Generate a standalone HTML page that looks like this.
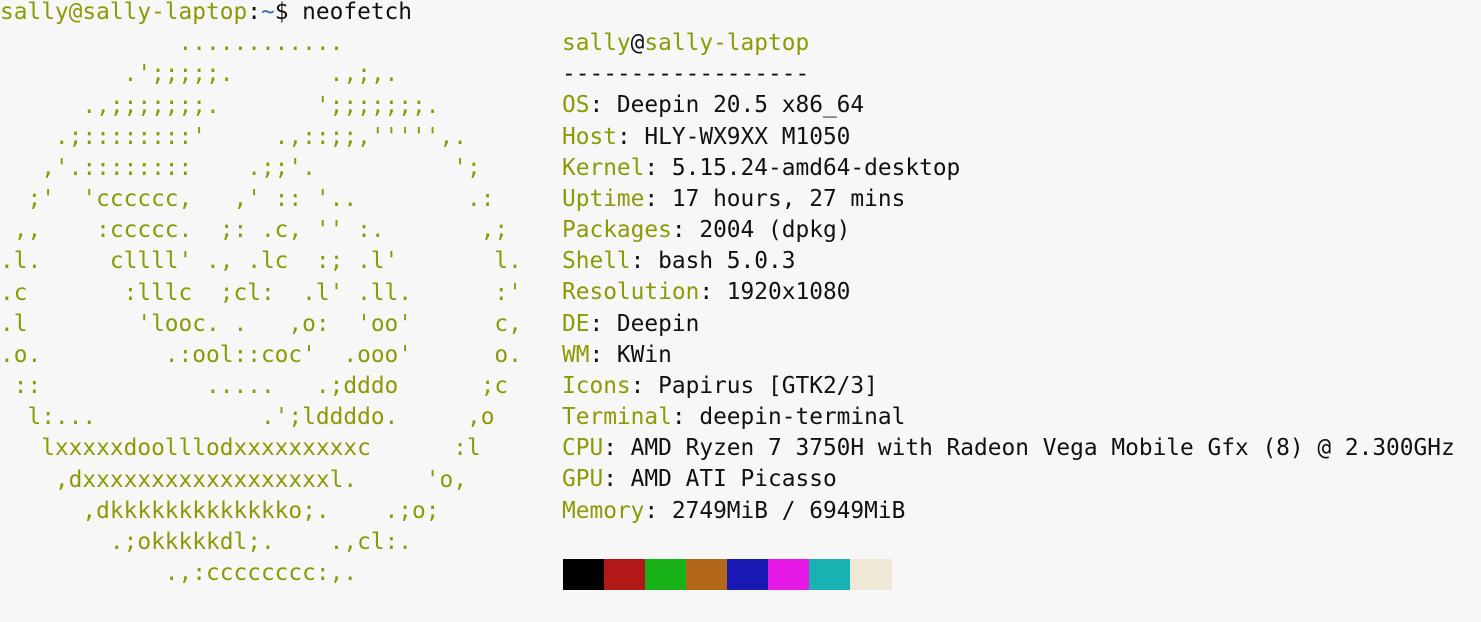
<!DOCTYPE html>
<html><head><meta charset="utf-8"><style>
html,body{margin:0;padding:0;background:#f7f7f7;width:1481px;height:622px;overflow:hidden}
pre{position:absolute;margin:0;font-family:"DejaVu Sans Mono","Liberation Mono",monospace;font-size:22.82px;line-height:31.17px;color:#111;white-space:pre}
.g{color:#8c9a05}
.b{color:#3a6bb0}
#a{left:0;top:-3px}
#i{left:562px;top:28px}
.blk{position:absolute;top:559px;height:31px;width:41.2px}
</style></head><body>
<pre id="a"><span class="g">sally@sally-laptop</span>:<span class="b">~</span>$ neofetch
<span class="g">             ............
         .';;;;;.       .,;,.
      .,;;;;;;;.       ';;;;;;;.
    .;::::::::'     .,::;;,''''',.
   ,'.::::::::    .;;'.          ';
  ;'  'cccccc,   ,' :: '..        .:
 ,,    :ccccc.  ;: .c, '' :.       ,;
.l.     cllll' ., .lc  :; .l'       l.
.c       :lllc  ;cl:  .l' .ll.      :'
.l        'looc. .   ,o:  'oo'      c,
.o.         .:ool::coc'  .ooo'      o.
 ::            .....   .;dddo      ;c
  l:...            .';lddddo.     ,o
   lxxxxxdoolllodxxxxxxxxxc      :l
    ,dxxxxxxxxxxxxxxxxxxl.     'o,
      ,dkkkkkkkkkkkkko;.    .;o;
        .;okkkkkdl;.    .,cl:.
            .,:cccccccc:,.</span></pre>
<pre id="i"><span class="g">sally</span>@<span class="g">sally-laptop</span>
------------------
<span class="g">OS</span>: Deepin 20.5 x86_64
<span class="g">Host</span>: HLY-WX9XX M1050
<span class="g">Kernel</span>: 5.15.24-amd64-desktop
<span class="g">Uptime</span>: 17 hours, 27 mins
<span class="g">Packages</span>: 2004 (dpkg)
<span class="g">Shell</span>: bash 5.0.3
<span class="g">Resolution</span>: 1920x1080
<span class="g">DE</span>: Deepin
<span class="g">WM</span>: KWin
<span class="g">Icons</span>: Papirus [GTK2/3]
<span class="g">Terminal</span>: deepin-terminal
<span class="g">CPU</span>: AMD Ryzen 7 3750H with Radeon Vega Mobile Gfx (8) @ 2.300GHz
<span class="g">GPU</span>: AMD ATI Picasso
<span class="g">Memory</span>: 2749MiB / 6949MiB</pre>
<div class="blk" style="left:563px;background:#000"></div>
<div class="blk" style="left:604px;background:#b21818"></div>
<div class="blk" style="left:645px;background:#18b218"></div>
<div class="blk" style="left:686px;background:#b26818"></div>
<div class="blk" style="left:727px;background:#1818b2"></div>
<div class="blk" style="left:768px;background:#e619e6"></div>
<div class="blk" style="left:809px;background:#18b2b2"></div>
<div class="blk" style="left:850px;background:#efe8d6;width:42px"></div>
</body></html>
